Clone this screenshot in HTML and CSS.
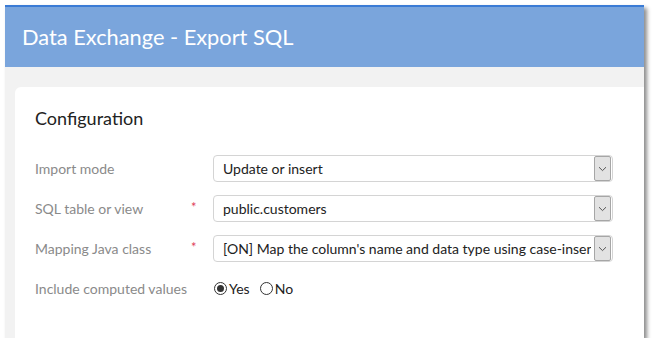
FILE: index.html
```html
<!DOCTYPE html>
<html>
<head>
<meta charset="utf-8">
<link rel="stylesheet" href="styles.css">
</head>
<body>
<div class="window">
  <div class="header">Data Exchange - Export SQL</div>
  <div class="content">
    <div class="card">
      <h2 class="section-title">Configuration</h2>
      <div class="form">
        <div class="row">
          <label class="label">Import mode</label>
          <span class="req"></span>
          <div class="select"><span class="value">Update or insert</span><span class="arrow"><svg width="9" height="6" viewBox="0 0 9 6"><path d="M1 1.2 L4.5 4.6 L8 1.2" fill="none" stroke="#555" stroke-width="1"/></svg></span></div>
        </div>
        <div class="row">
          <label class="label">SQL table or view</label>
          <span class="req">*</span>
          <div class="select"><span class="value">public.customers</span><span class="arrow"><svg width="9" height="6" viewBox="0 0 9 6"><path d="M1 1.2 L4.5 4.6 L8 1.2" fill="none" stroke="#555" stroke-width="1"/></svg></span></div>
        </div>
        <div class="row">
          <label class="label">Mapping Java class</label>
          <span class="req">*</span>
          <div class="select"><span class="value">[ON] Map the column's name and data type using case-insensitive matching</span><span class="arrow"><svg width="9" height="6" viewBox="0 0 9 6"><path d="M1 1.2 L4.5 4.6 L8 1.2" fill="none" stroke="#555" stroke-width="1"/></svg></span></div>
        </div>
        <div class="row">
          <label class="label">Include computed values</label>
          <span class="req"></span>
          <div class="radios">
            <span class="radio checked"></span><span class="radio-text">Yes</span>
            <span class="radio"></span><span class="radio-text">No</span>
          </div>
        </div>
      </div>
    </div>
  </div>
</div>
</body>
</html>
```
FILE: styles.css
```css
html, body {
  margin: 0;
  padding: 0;
  background: #ffffff;
}
body {
  padding: 5px 0 0 5px;
  font-family: Lato, "Open Sans", sans-serif;
}
.window {
  width: 639px;
  height: 333px;
  box-sizing: border-box;
  border-top: 2px solid #3a7bd5;
  box-shadow: 3px 3px 4px rgba(0,0,0,0.45);
  display: flex;
  flex-direction: column;
  background: #f2f2f2;
}
.header {
  height: 60px;
  flex: none;
  background: #7aa5dc;
  color: #ffffff;
  font-size: 21.8px;
  line-height: 60px;
  padding-left: 17px;
}
.content {
  flex: 1;
  padding: 20px 0 0 10px;
  display: flex;
}
.card {
  flex: 1;
  background: #ffffff;
  border-top-left-radius: 6px;
  padding: 19px 0 0 20px;
}
.section-title {
  margin: 0;
  font-size: 18px;
  font-weight: normal;
  line-height: 24px;
  color: #222;
}
.form {
  margin-top: 25px;
  display: flex;
  flex-direction: column;
  gap: 13px;
}
.row {
  display: flex;
  align-items: center;
  height: 27px;
}
.label {
  width: 156px;
  font-size: 14px;
  color: #8a8a8a;
}
.req {
  width: 22px;
  color: #e0405a;
  font-size: 13px;
  line-height: 13px;
  margin-bottom: 2px;
}
.select {
  width: 400px;
  height: 27px;
  box-sizing: border-box;
  border: 1px solid #d4d4d4;
  border-radius: 4px;
  display: flex;
  align-items: center;
  padding: 0 1px 0 9px;
  font-size: 14px;
  color: #222;
}
.value {
  flex: 1;
  white-space: nowrap;
  overflow: hidden;
}
.arrow {
  flex: none;
  width: 17px;
  height: 25px;
  box-sizing: border-box;
  background: #e2e2e2;
  border: 1px solid #a6a6a6;
  border-radius: 2px;
  display: flex;
  align-items: center;
  justify-content: center;
  margin-left: 3px;
}
.radios {
  display: flex;
  align-items: center;
  font-size: 14px;
  color: #222;
  padding-left: 1px;
}
.radio {
  width: 13px;
  height: 13px;
  box-sizing: border-box;
  border: 1px solid #333;
  border-radius: 50%;
  display: inline-flex;
  align-items: center;
  justify-content: center;
  margin-right: 2px;
}
.radio.checked::after {
  content: "";
  width: 7px;
  height: 7px;
  border-radius: 50%;
  background: #333;
}
.radio-text {
  margin-right: 10px;
}
```
